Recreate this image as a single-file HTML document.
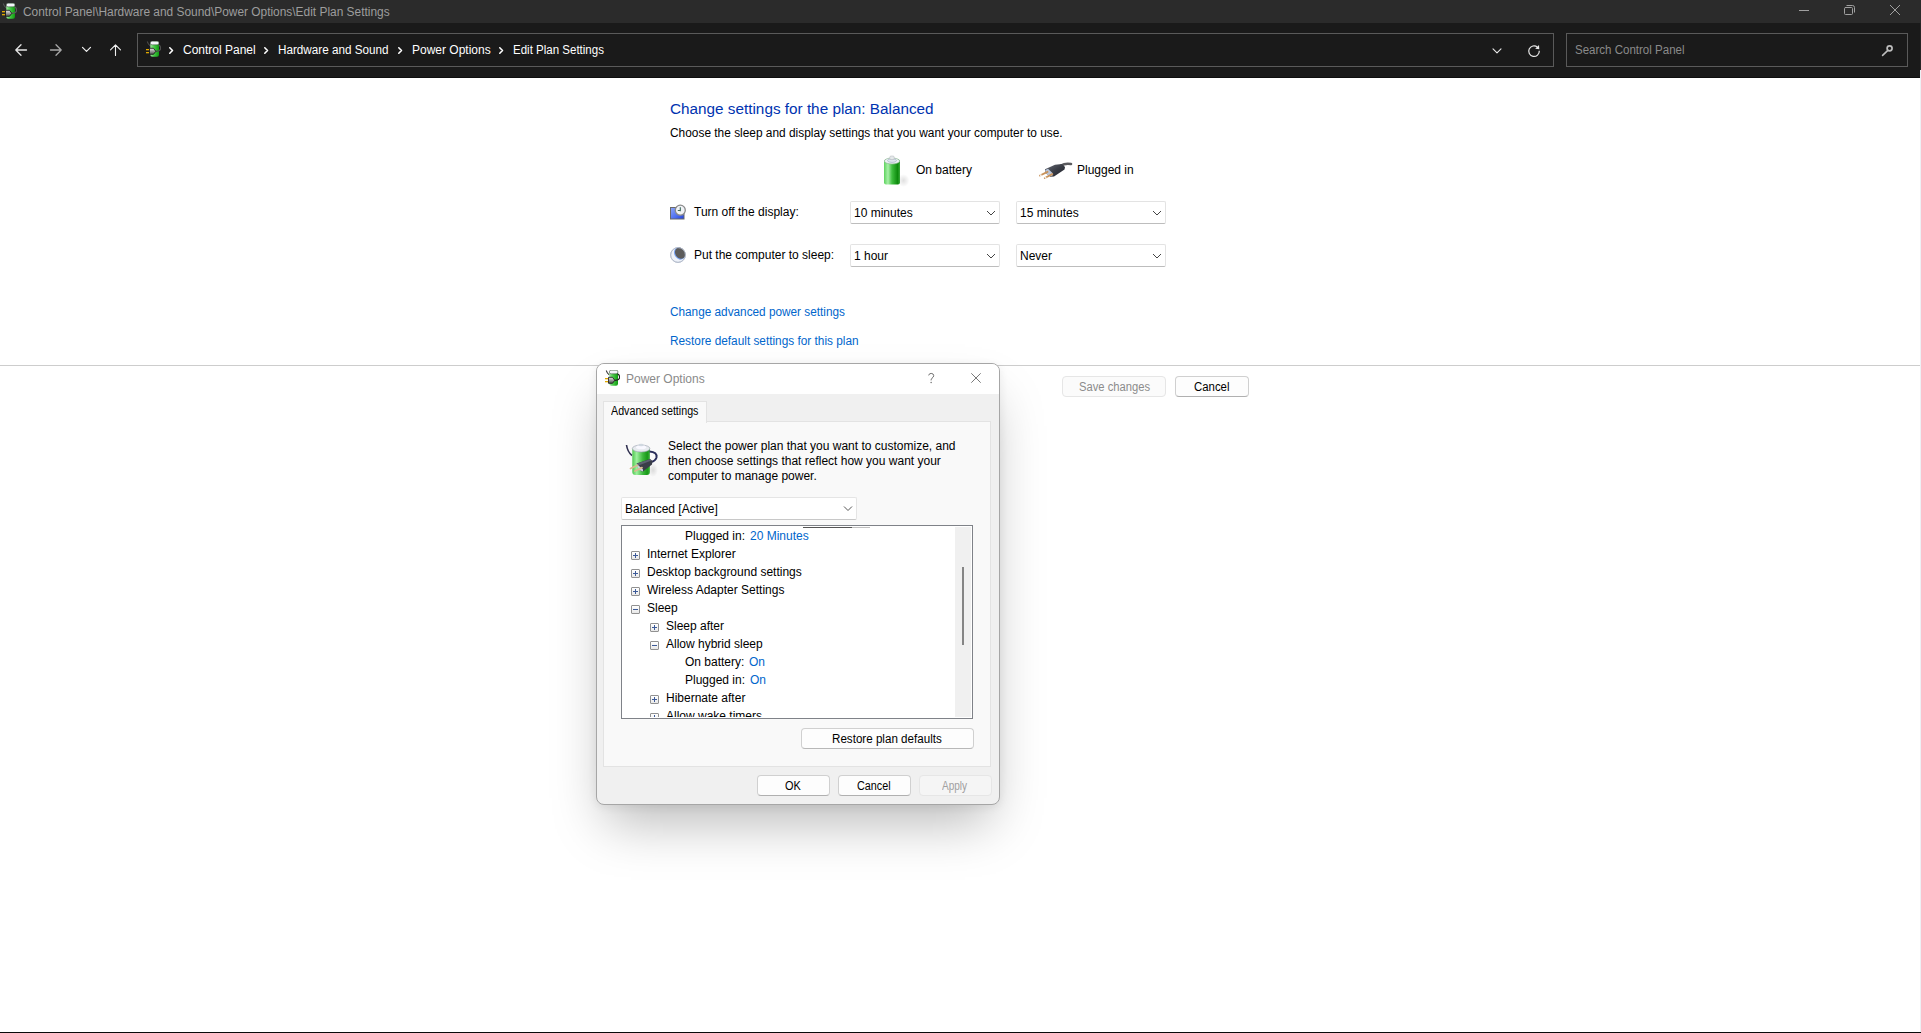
<!DOCTYPE html>
<html><head><meta charset="utf-8">
<style>
html,body{margin:0;padding:0}
body{width:1921px;height:1033px;position:relative;overflow:hidden;background:#fff;font-family:"Liberation Sans",sans-serif;}
.a{position:absolute}
.t{position:absolute;white-space:pre;font-size:12px;line-height:12px;color:#000}
#titlebar{left:0;top:0;width:1921px;height:23px;background:#2b2b2b}
#toolbar{left:0;top:23px;width:1921px;height:54px;background:#1a1a1a}
#tbline{left:0;top:77px;width:1921px;height:1px;background:#0e0e0e}
#addr{left:137px;top:33px;width:1415px;height:32px;border:1px solid #5a5a5a;background:#1a1a1a}
#search{left:1566px;top:33px;width:340px;height:32px;border:1px solid #5a5a5a;background:#1a1a1a}
.bc{color:#fff}
.link{color:#0066cc}
.dd{position:absolute;background:#fff;border:1px solid #e3e3e3;border-bottom-color:#bdbdbd;border-radius:2px;box-sizing:border-box}
.btn{position:absolute;box-sizing:border-box;border:1px solid #d0d0d0;border-bottom-color:#b0b0b0;border-radius:4px;background:#fdfdfd}
.btn.dis{border-color:#e6e6e6;background:#fbfbfb}
#sep{left:0;top:365px;width:1921px;height:1px;background:#cdcdcd}
#dlg{left:596px;top:363px;width:402px;height:440px;border:1px solid #a6a6a6;border-radius:8px;background:#f0f0f0;box-shadow:0 28px 50px -10px rgba(0,0,0,0.27),0 2px 10px rgba(0,0,0,0.07);overflow:hidden}
#dlgtitle{left:0;top:0;width:402px;height:30px;background:#fff}
.exp{position:absolute;width:9px;height:9px;box-sizing:border-box;border:1px solid #919191;border-radius:1px;background:linear-gradient(#fff,#e8e8e8)}
.exp b{position:absolute;left:1px;top:3px;width:5px;height:1px;background:#3c5a98}
.exp i{position:absolute;left:3px;top:1px;width:1px;height:5px;background:#3c5a98}
</style></head><body>

<div id="titlebar" class="a"></div>
<div id="toolbar" class="a"></div>
<div id="tbline" class="a"></div>
<div id="addr" class="a"></div>
<div id="search" class="a"></div>


<!-- nav icons -->
<svg class="a" style="left:0;top:0" width="1921" height="78" viewBox="0 0 1921 78">
 <g fill="none" stroke-linecap="round" stroke-linejoin="round">
  <path d="M26.5 50H15.8M21 44.8L15.8 50L21 55.2" stroke="#e6e6e6" stroke-width="1.3"/>
  <path d="M50.5 50H61.2M56 44.8L61.2 50L56 55.2" stroke="#a8a8a8" stroke-width="1.3"/>
  <path d="M82.5 47.3L86.5 51.3L90.5 47.3" stroke="#f0f0f0" stroke-width="1.2"/>
  <path d="M115.5 55.5V44.8M110.5 49.8L115.5 44.8L120.5 49.8" stroke="#f0f0f0" stroke-width="1.1"/>
  <path d="M169.8 47.8L172.5 50.5L169.8 53.2" stroke="#fff" stroke-width="1.6"/>
  <path d="M264.8 47.8L267.5 50.5L264.8 53.2" stroke="#fff" stroke-width="1.6"/>
  <path d="M398.8 47.8L401.5 50.5L398.8 53.2" stroke="#fff" stroke-width="1.6"/>
  <path d="M499.8 47.8L502.5 50.5L499.8 53.2" stroke="#fff" stroke-width="1.6"/>
  <path d="M1493 48.8L1497 52.8L1501 48.8" stroke="#e8e8e8" stroke-width="1.1"/>
  <path d="M1537.4 47.1A5.3 5.3 0 1 0 1539.28 50.74" stroke="#e8e8e8" stroke-width="1.2" stroke-linecap="butt"/>
  <path d="M1535.2 48.7L1539.3 49.2L1539 45Z" fill="#e8e8e8" stroke="none"/>
  <circle cx="1889.6" cy="48.3" r="2.5" stroke="#bdbdbd" stroke-width="1.7"/>
  <path d="M1887.6 50.6L1882.6 55.4" stroke="#bdbdbd" stroke-width="1.6"/>
  <path d="M1799 10.5H1809" stroke="#a0a0a0" stroke-width="1" stroke-linecap="butt"/>
  <rect x="1844.5" y="7.5" width="8" height="7" rx="1" stroke="#a0a0a0" stroke-width="1"/>
  <path d="M1846.5 5.5H1852.5a2 2 0 0 1 2 2V12.5" stroke="#a0a0a0" stroke-width="1" stroke-linecap="butt"/>
  <path d="M1890 5L1900 15M1900 5L1890 15" stroke="#a0a0a0" stroke-width="1" stroke-linecap="butt"/>
 </g>
</svg>
<svg width="0" height="0" style="position:absolute">
 <defs>
  <linearGradient id="pgr" x1="0" x2="1"><stop offset="0" stop-color="#9ee89e"/><stop offset="0.45" stop-color="#44c844"/><stop offset="1" stop-color="#109a10"/></linearGradient>
  <linearGradient id="plg" x1="0" x2="0" y1="0" y2="1"><stop offset="0" stop-color="#e8e8e8"/><stop offset="1" stop-color="#505050"/></linearGradient>
  <symbol id="pwr" viewBox="0 0 16 16">
   <path d="M2.3 0.5 Q3 3.5 5.5 5" stroke="currentColor" stroke-width="1.1" fill="none"/>
   <rect x="5.3" y="0.2" width="8.7" height="15.5" rx="2" fill="url(#pgr)"/>
   <rect x="5.3" y="0.2" width="8.7" height="3.6" rx="1.8" fill="#f4f4fa" stroke="#444" stroke-width="0.5"/>
   <path d="M10 10.5 Q16 10.5 15.6 6.8 Q15.2 4.2 13.5 4.2" stroke="currentColor" stroke-width="1.2" fill="none"/>
   <path d="M4.5 7.3 H8.5 L10.8 10.3 L8.5 13.3 H4.5 Z" fill="url(#plg)" stroke="#111" stroke-width="0.8"/>
   <rect x="1" y="8" width="3" height="1.3" fill="#e0a800"/>
   <rect x="1" y="11" width="3" height="1.3" fill="#e0a800"/>
  </symbol>
 </defs>
</svg>
<svg class="a" style="left:1px;top:2.5px;color:#5a5a5a" width="16" height="16"><use href="#pwr"/></svg>
<svg class="a" style="left:145px;top:41px;color:#505050" width="16" height="16"><use href="#pwr"/></svg>

<!-- title text -->
<div class="t" style="left:23px;top:5.8px;color:#9d9d9d;transform-origin:0 0;transform:scaleX(0.992)">Control Panel\Hardware and Sound\Power Options\Edit Plan Settings</div>

<!-- breadcrumb -->
<div class="t bc" style="left:183px;top:43.8px">Control Panel</div>
<div class="t bc" style="left:278px;top:43.8px;transform-origin:0 0;transform:scaleX(0.975)">Hardware and Sound</div>
<div class="t bc" style="left:412px;top:43.8px">Power Options</div>
<div class="t bc" style="left:513px;top:43.8px;transform-origin:0 0;transform:scaleX(0.96)">Edit Plan Settings</div>
<div class="t" style="left:1575px;top:43.8px;color:#8a8a8a;transform-origin:0 0;transform:scaleX(0.96)">Search Control Panel</div>

<!-- main -->
<div class="t" style="left:670px;top:101px;font-size:15.2px;line-height:15.2px;color:#0033b0;transform-origin:0 0;transform:scaleX(1.007)">Change settings for the plan: Balanced</div>
<div class="t" style="left:670px;top:126.8px;transform-origin:0 0;transform:scaleX(0.991)">Choose the sleep and display settings that you want your computer to use.</div>
<div class="t" style="left:916px;top:163.8px">On battery</div>
<div class="t" style="left:1077px;top:163.8px">Plugged in</div>
<div class="t" style="left:694px;top:206.4px">Turn off the display:</div>
<div class="t" style="left:694px;top:249.4px">Put the computer to sleep:</div>

<div class="dd" style="left:850px;top:201px;width:150px;height:23px"></div>
<div class="dd" style="left:1016px;top:201px;width:150px;height:23px"></div>
<div class="dd" style="left:850px;top:244px;width:150px;height:23px"></div>
<div class="dd" style="left:1016px;top:244px;width:150px;height:23px"></div>
<div class="t" style="left:854px;top:206.5px">10 minutes</div>
<div class="t" style="left:1020px;top:206.5px">15 minutes</div>
<div class="t" style="left:854px;top:249.8px">1 hour</div>
<div class="t" style="left:1020px;top:249.8px">Never</div>


<!-- battery icon -->
<svg class="a" style="left:876px;top:152px" width="36" height="36" viewBox="0 0 36 36">
 <defs>
  <linearGradient id="bg1" x1="0" x2="1" y1="0" y2="0">
   <stop offset="0" stop-color="#5fd35f"/><stop offset="0.25" stop-color="#a8f0a8"/><stop offset="0.5" stop-color="#3fbf3f"/><stop offset="0.85" stop-color="#0c8a0c"/><stop offset="1" stop-color="#3aa83a"/>
  </linearGradient>
  <radialGradient id="sh1" cx="0.5" cy="0.5" r="0.5"><stop offset="0" stop-color="#000" stop-opacity="0.12"/><stop offset="1" stop-color="#000" stop-opacity="0"/></radialGradient>
 </defs>
 <ellipse cx="27.5" cy="28.5" rx="6" ry="6.5" fill="url(#sh1)"/>
 <rect x="8" y="7.5" width="16" height="25" rx="2" fill="url(#bg1)"/>
 <ellipse cx="16" cy="9" rx="7.6" ry="3" fill="#eef2f4" stroke="#8fb89a" stroke-width="0.7"/>
 <ellipse cx="16" cy="8.6" rx="4.5" ry="1.8" fill="#dfe6ee" stroke="#9aa6c0" stroke-width="0.6"/>
 <rect x="13.8" y="4" width="4.4" height="3.6" rx="1.2" fill="#e4e8ea" stroke="#b0b4b8" stroke-width="0.5"/>
</svg>
<!-- plug icon -->
<svg class="a" style="left:1036px;top:158px" width="40" height="26" viewBox="1036 158 40 26">
 <defs><linearGradient id="pg" x1="0" x2="1" y1="0" y2="1"><stop offset="0" stop-color="#6a6e78"/><stop offset="0.5" stop-color="#3a3d46"/><stop offset="1" stop-color="#1c1e28"/></linearGradient></defs>
 <path d="M1061 165.5 Q1065 163 1071 164" stroke="#5a5a5e" stroke-width="2.6" fill="none" stroke-linecap="round"/>
 <path d="M1045 169.3 L1055 164.8 L1062 164 L1065 167 L1064.5 169.5 L1054 176.5 L1050.5 176.8 L1045 172.8 Z" fill="url(#pg)"/>
 <path d="M1045.3 170 L1048 168.8 L1052.8 173.2 L1052.3 176.2 L1048.5 175.8 L1045.3 172.6 Z" fill="#b8c4d8"/>
 <path d="M1040 175.5 L1047.5 171.8" stroke="#c8925a" stroke-width="1.9" stroke-linecap="round"/>
 <path d="M1044.8 178 L1052.3 174.2" stroke="#c8925a" stroke-width="1.9" stroke-linecap="round"/>
 <path d="M1040 175.5 L1041.5 174.8M1044.8 178 L1046.3 177.3" stroke="#f4f0ec" stroke-width="1.9"/>
</svg>
<!-- display icon -->
<svg class="a" style="left:668px;top:202px" width="20" height="20" viewBox="0 0 20 20">
 <defs><linearGradient id="dg" x1="0" x2="1" y1="0" y2="1"><stop offset="0" stop-color="#8fa8f8"/><stop offset="0.6" stop-color="#4d6ef0"/><stop offset="1" stop-color="#1f3fd8"/></linearGradient></defs>
 <rect x="2.5" y="5.5" width="13.5" height="11.5" fill="url(#dg)" stroke="#6a6a6a" stroke-width="1"/>
 <circle cx="12.3" cy="8.2" r="5" fill="#f0f2f6" stroke="#8a8a8a" stroke-width="1.3"/>
 <path d="M12.3 5.2V9.2M9.8 8.5H12.3" stroke="#3a6a5a" stroke-width="1.1" fill="none"/>
</svg>
<!-- sleep icon -->
<svg class="a" style="left:668px;top:245px" width="20" height="20" viewBox="0 0 20 20">
 <circle cx="10" cy="10" r="7.4" fill="#eef2fa" stroke="#b4bccc" stroke-width="0.9"/>
 <ellipse cx="11.6" cy="8.6" rx="5.2" ry="6.4" transform="rotate(-35 11.6 8.6)" fill="#7aa4f4"/>
 <ellipse cx="12.2" cy="8.2" rx="4.8" ry="6.0" transform="rotate(-35 12.2 8.2)" fill="#5c5c5c"/>
 <circle cx="10" cy="10" r="7.4" fill="none" stroke="#b4bccc" stroke-width="0.9"/>
</svg>
<!-- combo chevrons -->
<svg class="a" style="left:0;top:0" width="1200" height="300" viewBox="0 0 1200 300">
 <g fill="none" stroke="#444" stroke-width="1">
  <path d="M987 211L991 215L995 211"/><path d="M1153 211L1157 215L1161 211"/>
  <path d="M987 254L991 258L995 254"/><path d="M1153 254L1157 258L1161 254"/>
 </g>
</svg>

<div class="t link" style="left:670px;top:305.5px;transform-origin:0 0;transform:scaleX(0.982)">Change advanced power settings</div>
<div class="t link" style="left:670px;top:334.6px;transform-origin:0 0;transform:scaleX(0.985)">Restore default settings for this plan</div>

<div id="sep" class="a"></div>
<div class="btn dis" style="left:1062px;top:376px;width:104px;height:21px"></div>
<div class="btn" style="left:1175px;top:376px;width:74px;height:21px"></div>
<div class="t" style="left:1079px;top:380.6px;color:#8c8c8c;transform-origin:0 0;transform:scaleX(0.935)">Save changes</div>
<div class="t" style="left:1194px;top:380.6px;transform-origin:0 0;transform:scaleX(0.95)">Cancel</div>


<!-- dialog -->
<div id="dlg" class="a">
  <div id="dlgtitle" class="a"></div>
</div>
<svg class="a" style="left:604px;top:370px;color:#222" width="16" height="16"><use href="#pwr"/></svg>
<div class="t" style="left:626px;top:373.2px;color:#8a8a8a">Power Options</div>
<svg class="a" style="left:920px;top:366px" width="72" height="24" viewBox="920 366 72 24">
 <path d="M971.3 373.3L980.7 382.7M980.7 373.3L971.3 382.7" stroke="#787878" stroke-width="1" fill="none"/>
 <path d="M928.7 375.4Q929 373.4 931.2 373.4Q933.7 373.5 933.7 375.6Q933.7 377.1 932 378.2Q931.1 378.9 931.1 380.4" stroke="#707070" stroke-width="1" fill="none"/>
 <circle cx="931.1" cy="382.4" r="0.75" fill="#707070"/>
</svg>


<!-- tab -->
<div class="a" style="left:603px;top:421px;width:386px;height:344px;background:#f9f9f9;border:1px solid #e3e3e3"></div>
<div class="a" style="left:603px;top:401px;width:102px;height:21px;background:#f9f9f9;border:1px solid #e3e3e3;border-bottom:none"></div>
<div class="t" style="left:611px;top:404.9px;transform-origin:0 0;transform:scaleX(0.892)">Advanced settings</div>

<!-- big icon -->
<svg class="a" style="left:622px;top:438px" width="40" height="40" viewBox="622 438 40 40">
 <defs>
  <linearGradient id="bg2" x1="0" x2="1"><stop offset="0" stop-color="#50c850"/><stop offset="0.25" stop-color="#9ef09e"/><stop offset="0.6" stop-color="#3cb83c"/><stop offset="0.85" stop-color="#189818"/><stop offset="1" stop-color="#40b040"/></linearGradient>
  <radialGradient id="sh2" cx="0.5" cy="0.5" r="0.5"><stop offset="0" stop-color="#000" stop-opacity="0.12"/><stop offset="1" stop-color="#000" stop-opacity="0"/></radialGradient>
 </defs>
 <ellipse cx="653" cy="470" rx="5" ry="7" fill="url(#sh2)"/>
 <path d="M626.5 445 Q627.5 452 632 455.5" stroke="#303050" stroke-width="1.6" fill="none"/>
 <rect x="632.3" y="447" width="17.6" height="28" rx="3" fill="url(#bg2)"/>
 <ellipse cx="641.1" cy="448.5" rx="8.8" ry="3.5" fill="#e6eaee" stroke="#9aa0b0" stroke-width="0.6"/>
 <ellipse cx="641.1" cy="447.3" rx="5" ry="2" fill="#f8f8ff"/>
 <ellipse cx="641.1" cy="445" rx="2.6" ry="1.3" fill="#d0d8e0"/>
 <path d="M649.5 451.5 Q657.5 452 656.5 457.5 Q655.5 461 651 462" stroke="#2a2d5a" stroke-width="2" fill="none"/>
 <path d="M636.5 463.5 L650 459 L652.5 461 L652 464.5 L643 471.5 L640.5 471 Z" fill="#3a3d48"/>
 <path d="M637 463.6 L650 459.2 L651.5 460.5 L638.5 465.5 Z" fill="#5c6070"/>
 <path d="M636.5 464 L638.5 465.5 L643 469.5 L643 471.5 L639 470 Z" fill="#c8d0e0"/>
 <path d="M630.5 468.5 L637.5 465.3M635 471 L642 467.6" stroke="#d8b890" stroke-width="1.8" stroke-linecap="round"/>
</svg>
<div class="t" style="left:668px;top:440.3px">Select the power plan that you want to customize, and</div>
<div class="t" style="left:668px;top:455.3px">then choose settings that reflect how you want your</div>
<div class="t" style="left:668px;top:470.3px">computer to manage power.</div>

<div class="dd" style="left:621px;top:497px;width:236px;height:23px;border-color:#e5e5e5;border-bottom-color:#c8c8c8"></div>
<div class="t" style="left:625px;top:502.8px">Balanced [Active]</div>
<svg class="a" style="left:840px;top:502px" width="16" height="14" viewBox="840 502 16 14">
 <path d="M844 506.5L848 510.5L852 506.5" stroke="#555" stroke-width="1" fill="none"/>
</svg>

<!-- tree -->
<div class="a" style="left:621px;top:525px;width:350px;height:192px;border:1px solid #7f8288;background:#fff;overflow:hidden">
</div>
<div class="a" style="left:955px;top:527px;width:16px;height:190px;background:#f0f0f0"></div>
<div class="a" style="left:962px;top:567px;width:2px;height:78px;background:#858585"></div>
<div class="a" style="left:803px;top:527px;width:49px;height:1px;background:#555"></div>
<div class="a" style="left:852px;top:527px;width:18px;height:1px;background:#c0c0c0"></div>
<div class="a" id="tree" style="left:622px;top:526px;width:333px;height:191px;overflow:hidden">
 <div class="t" style="left:63px;top:4px">Plugged in:</div><div class="t link" style="left:128px;top:4px">20 Minutes</div>
 <div class="exp" style="left:9px;top:25px"><b></b><i></i></div><div class="t" style="left:25px;top:22px">Internet Explorer</div>
 <div class="exp" style="left:9px;top:43px"><b></b><i></i></div><div class="t" style="left:25px;top:40px">Desktop background settings</div>
 <div class="exp" style="left:9px;top:61px"><b></b><i></i></div><div class="t" style="left:25px;top:58px">Wireless Adapter Settings</div>
 <div class="exp" style="left:9px;top:79px"><b></b></div><div class="t" style="left:25px;top:76px">Sleep</div>
 <div class="exp" style="left:28px;top:97px"><b></b><i></i></div><div class="t" style="left:44px;top:94px">Sleep after</div>
 <div class="exp" style="left:28px;top:115px"><b></b></div><div class="t" style="left:44px;top:112px">Allow hybrid sleep</div>
 <div class="t" style="left:63px;top:130px">On battery:</div><div class="t link" style="left:127px;top:130px">On</div>
 <div class="t" style="left:63px;top:148px">Plugged in:</div><div class="t link" style="left:128px;top:148px">On</div>
 <div class="exp" style="left:28px;top:169px"><b></b><i></i></div><div class="t" style="left:44px;top:166px">Hibernate after</div>
 <div class="exp" style="left:28px;top:187px"><b></b><i></i></div><div class="t" style="left:44px;top:184px">Allow wake timers</div>
</div>

<div class="btn" style="left:801px;top:728px;width:173px;height:21px;border-color:#d0d0d0;border-bottom-color:#b8b8b8"></div>
<div class="t" style="left:832px;top:732.7px;transform-origin:0 0;transform:scaleX(0.968)">Restore plan defaults</div>

<div class="btn" style="left:757px;top:775px;width:73px;height:21px"></div>
<div class="btn" style="left:838px;top:775px;width:73px;height:21px"></div>
<div class="btn dis" style="left:919px;top:775px;width:73px;height:21px;background:#f5f5f5"></div>
<div class="t" style="left:785px;top:780px;transform-origin:0 0;transform:scaleX(0.911)">OK</div>
<div class="t" style="left:857px;top:780px;transform-origin:0 0;transform:scaleX(0.9)">Cancel</div>
<div class="t" style="left:942px;top:780px;color:#a0a0a0;transform-origin:0 0;transform:scaleX(0.836)">Apply</div>


<div class="a" style="left:1920px;top:0;width:1px;height:23px;background:#2b2b2b"></div>
<div class="a" style="left:1920px;top:23px;width:1px;height:47px;background:#262626"></div>
<div class="a" style="left:1920px;top:70px;width:1px;height:962px;background:#edf1f5"></div>
<div class="a" style="left:0;top:1032px;width:1921px;height:1px;background:#0a0a0a"></div>
</body></html>
